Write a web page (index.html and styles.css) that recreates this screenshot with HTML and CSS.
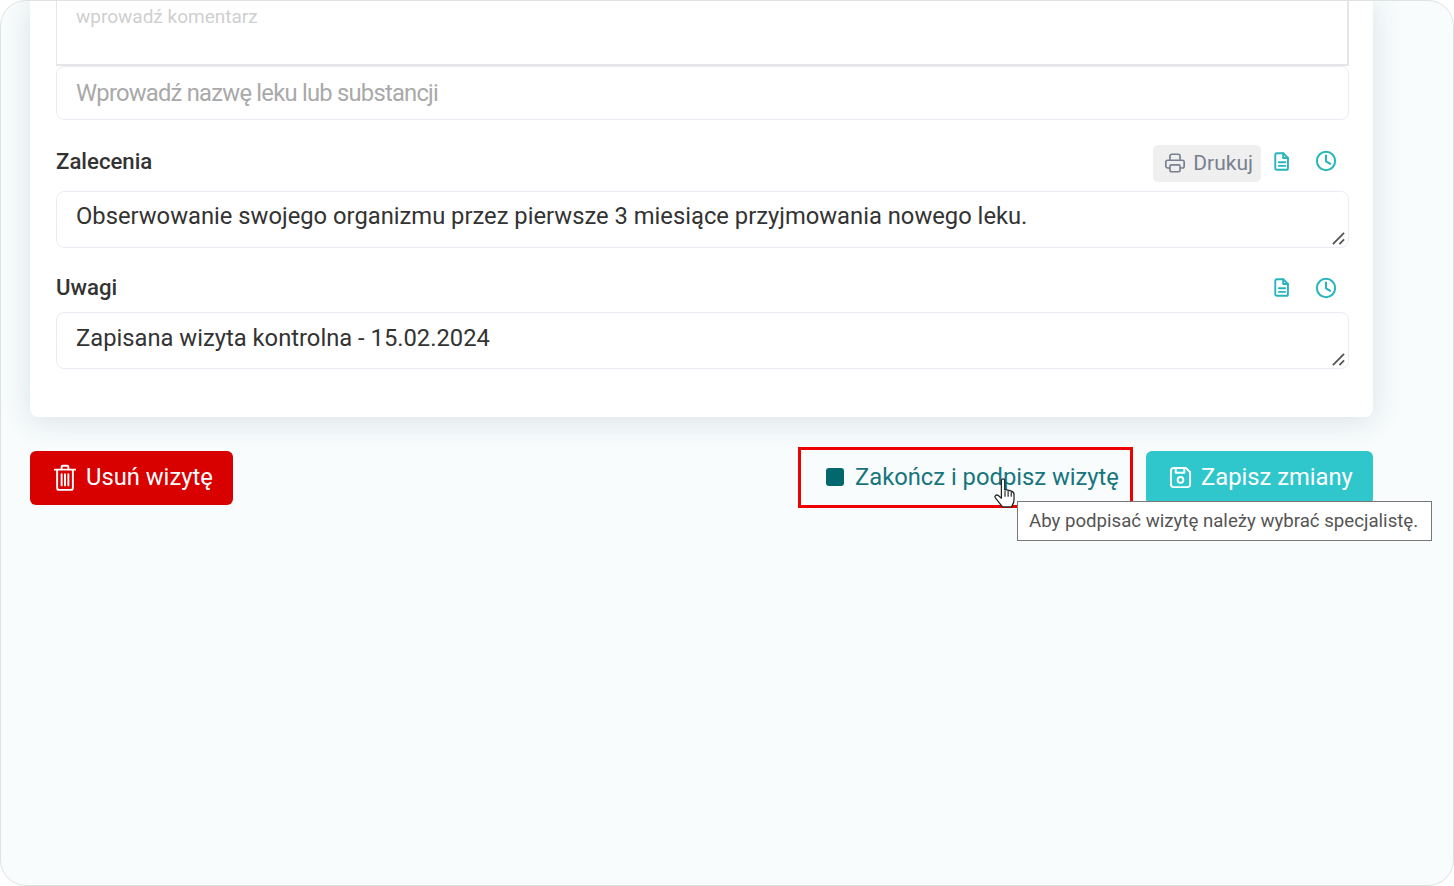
FILE: index.html
```html
<!DOCTYPE html>
<html lang="pl">
<head>
    <meta charset="UTF-8">
    <meta name="viewport" content="width=device-width, initial-scale=1.0">
    <title>Wizyta</title>
    <link rel="stylesheet" href="styles.css">
</head>
<body>
    <div class="screen">
        <div class="card">
            <div class="comment-box">wprowadź komentarz</div>
            <div class="field drug-input">Wprowadź nazwę leku lub substancji</div>

            <div class="section-head head-first">
                <span class="section-title">Zalecenia</span>
                <div class="section-tools">
                    <button class="print-button">
                        <svg class="icon-print" viewBox="0 0 24 24" fill="none" stroke="currentColor" stroke-width="1.8" stroke-linejoin="round">
                            <path d="M6.5 9V4.5a2 2 0 0 1 2-2h7a2 2 0 0 1 2 2V9"/>
                            <rect x="2" y="9" width="20" height="8.5" rx="2"/>
                            <rect x="6.5" y="14" width="11" height="7.5" rx="1.5" fill="#efefef"/>
                        </svg>
                        Drukuj
                    </button>
                    <svg class="tool-icon icon-doc" viewBox="0 0 20 24" fill="none" stroke="currentColor" stroke-width="2.4" stroke-linejoin="round" stroke-linecap="round">
                        <path d="M3.5 1.5h8l6 6v13a2 2 0 0 1-2 2h-12a2 2 0 0 1-2-2v-17a2 2 0 0 1 2-2z"/>
                        <path d="M11.5 1.5v6h6M6 13h8M6 17.5h8"/>
                    </svg>
                    <svg class="tool-icon icon-clock" viewBox="0 0 24 24" fill="none" stroke="currentColor" stroke-width="2.2" stroke-linecap="round" stroke-linejoin="round">
                        <circle cx="12" cy="12" r="10"/>
                        <path d="M12 6v6.5l4.5 2.5"/>
                    </svg>
                </div>
            </div>
            <div class="field note">
                Obserwowanie swojego organizmu przez pierwsze 3 miesiące przyjmowania nowego leku.
                <svg class="resize-grip" viewBox="0 0 14 14" fill="none" stroke="#555" stroke-width="2"><path d="M1 13 13 1M8 13l5-5"/></svg>
            </div>

            <div class="section-head head-second">
                <span class="section-title">Uwagi</span>
                <div class="section-tools">
                    <svg class="tool-icon icon-doc" viewBox="0 0 20 24" fill="none" stroke="currentColor" stroke-width="2.4" stroke-linejoin="round" stroke-linecap="round">
                        <path d="M3.5 1.5h8l6 6v13a2 2 0 0 1-2 2h-12a2 2 0 0 1-2-2v-17a2 2 0 0 1 2-2z"/>
                        <path d="M11.5 1.5v6h6M6 13h8M6 17.5h8"/>
                    </svg>
                    <svg class="tool-icon icon-clock" viewBox="0 0 24 24" fill="none" stroke="currentColor" stroke-width="2.2" stroke-linecap="round" stroke-linejoin="round">
                        <circle cx="12" cy="12" r="10"/>
                        <path d="M12 6v6.5l4.5 2.5"/>
                    </svg>
                </div>
            </div>
            <div class="field note note-last">
                Zapisana wizyta kontrolna - 15.02.2024
                <svg class="resize-grip" viewBox="0 0 14 14" fill="none" stroke="#555" stroke-width="2"><path d="M1 13 13 1M8 13l5-5"/></svg>
            </div>
        </div>

        <div class="actions">
            <button class="btn btn-delete">
                <svg class="btn-icon" viewBox="0 0 20 24" fill="none" stroke="currentColor" stroke-width="1.7" stroke-linecap="round" stroke-linejoin="round">
                    <path d="M1 5h18M7 4.5V2.5a1 1 0 0 1 1-1h4a1 1 0 0 1 1 1v2M3 5v16a2 2 0 0 0 2 2h10a2 2 0 0 0 2-2V5M7 9v10M10 9v10M13 9v10"/>
                </svg>
                Usuń wizytę
            </button>
            <div class="actions-right">
                <div class="finish-wrap">
                    <button class="btn btn-finish">
                        <span class="stop-mark"></span>
                        Zakończ i podpisz wizytę
                    </button>
                    <span class="highlight"></span>
                    <svg class="cursor" viewBox="0 0 22 30">
                        <path d="M8 3.5a1.6 1.6 0 0 1 3.2 0V12l6 1.5c2 .6 3 1.6 3 3.5v5c0 2-.5 3.500-1.500 5l-1 2H9l-7-9c-1-1.500 1-3.500 3-2l3 2.500z" fill="#fff" stroke="#222" stroke-width="1.200" stroke-linejoin="round"/>
                        <path d="M11.500 13v6M14.500 13.500V19M17.500 14.500V19" stroke="#222" stroke-width="1.100"/>
                    </svg>
                </div>
                <button class="btn btn-save">
                    <svg class="btn-icon" viewBox="0 0 24 24" fill="none" stroke="currentColor" stroke-width="2" stroke-linejoin="round">
                        <path d="M5 2h12.500L22 6.500V19a3 3 0 0 1-3 3H5a3 3 0 0 1-3-3V5a3 3 0 0 1 3-3z"/>
                        <path d="M7 2v5h9V2"/>
                        <circle cx="12" cy="14.500" r="3"/>
                    </svg>
                    Zapisz zmiany
                </button>
                <div class="tooltip">Aby podpisać wizytę należy wybrać specjalistę.</div>
            </div>
        </div>
    </div>
</body>
</html>
```

FILE: styles.css
```css
* {
    margin: 0;
    padding: 0;
    box-sizing: border-box;
}

body {
    background: #ffffff;
    font-family: Roboto, 'Liberation Sans', sans-serif;
    overflow: hidden;
}

.screen {
    height: 886px;
    padding: 0 80px 0 30px;
    background: #f8fcfd;
    border: 1px solid #dfe2e3;
    border-radius: 26px;
    overflow: hidden;
}

.card {
    margin-left: -1px;
    margin-top: -1px;
    height: 417px;
    padding: 0 24px 0 26px;
    background: #ffffff;
    border-radius: 0 0 8px 8px;
    box-shadow: 0 4px 30px rgba(40, 60, 70, 0.14);
}

.comment-box {
    height: 66px;
    padding: 4px 19px;
    border: 2px solid #e6e6e6;
    border-top: none;
    border-left-width: 1px;
    font-size: 19px;
    line-height: 26px;
    color: #cfcfcf;
}

.field {
    position: relative;
    border: 1px solid #e9ecf2;
    border-radius: 8px;
    padding: 9px 19px;
    font-size: 23.75px;
    line-height: 30px;
    color: #333;
}

.drug-input {
    height: 54px;
    padding-top: 11px;
    letter-spacing: -0.76px;
    color: #a9a9a9;
}

.note {
    height: 57px;
}

.note-last {
    padding-top: 10px;
}

.resize-grip {
    position: absolute;
    right: 3px;
    bottom: 2px;
    width: 13px;
    height: 13px;
}

.section-head {
    display: flex;
    align-items: center;
    justify-content: space-between;
}

.head-first {
    height: 37px;
    margin: 25px 0 9px;
}

.head-first .section-title,
.head-first .tool-icon {
    margin-bottom: 5px;
}

.head-second {
    height: 37px;
    margin: 20px 0 7px;
}

.head-second .tool-icon {
    margin-top: 2px;
}

.section-title {
    font-size: 22.2px;
    font-weight: 500;
    color: #333;
}

.section-tools {
    display: flex;
    align-items: center;
    padding-right: 12px;
}

.print-button {
    display: flex;
    align-items: center;
    gap: 7px;
    height: 37px;
    padding: 0 8px 2px 11px;
    margin-right: 13px;
    border: none;
    border-radius: 5px;
    background: #efefef;
    font-family: inherit;
    font-size: 21px;
    color: #78808f;
}

.icon-print {
    width: 22px;
    height: 22px;
}

.tool-icon {
    color: #27b5bd;
}

.icon-doc {
    width: 16px;
    height: 19px;
}

.icon-clock {
    width: 22px;
    height: 22px;
    margin-left: 25px;
}

.actions {
    display: flex;
    justify-content: space-between;
    margin: 34px 0 0 -1px;
}

.actions-right {
    position: relative;
    display: flex;
    gap: 7px;
}

.btn {
    display: flex;
    align-items: center;
    height: 54px;
    padding-bottom: 2px;
    border: none;
    border-radius: 6px;
    font-family: inherit;
    font-size: 23.75px;
    cursor: pointer;
}

.btn-delete {
    width: 203px;
    gap: 9px;
    padding-left: 23px;
    background: #d90000;
    color: #ffffff;
}

.btn-delete .btn-icon {
    width: 24px;
    height: 27px;
}

.btn-finish {
    width: 341px;
    gap: 11px;
    padding-left: 28px;
    background: transparent;
    color: #17757c;
}

.btn-save {
    width: 227px;
    gap: 9px;
    padding-left: 23px;
    background: #2fc6cc;
    color: #ffffff;
}

.btn-icon {
    width: 23px;
    height: 25px;
}

.stop-mark {
    width: 18px;
    height: 18px;
    border-radius: 3px;
    background: #02686d;
}

.finish-wrap {
    position: relative;
}

.highlight {
    position: absolute;
    left: 0;
    top: -4px;
    width: 335px;
    height: 61px;
    border: 3px solid #ee0000;
}

.cursor {
    position: absolute;
    left: 195px;
    top: 26px;
    width: 23px;
    height: 31px;
}

.tooltip {
    position: absolute;
    left: 219px;
    top: 50px;
    width: 415px;
    height: 40px;
    padding-left: 11px;
    border: 1px solid #777;
    background: #ffffff;
    font-size: 18.65px;
    line-height: 38px;
    color: #555;
    white-space: nowrap;
}
```
